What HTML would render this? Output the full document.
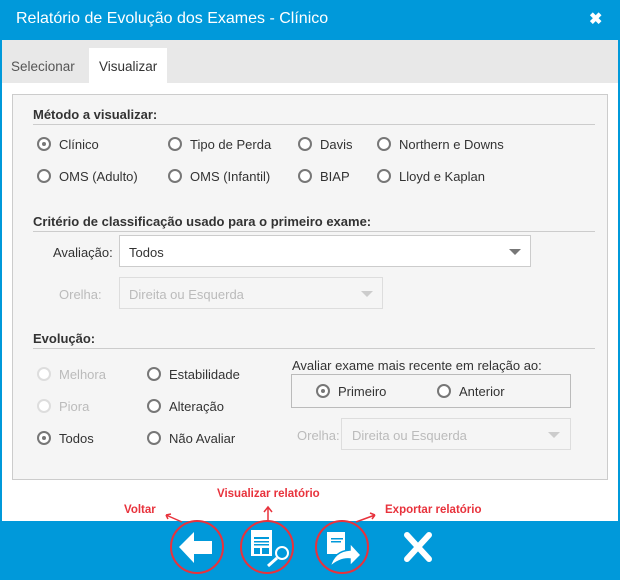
<!DOCTYPE html>
<html><head><meta charset="utf-8"><style>
*{margin:0;padding:0;box-sizing:border-box}
body{width:620px;height:580px;position:relative;background:#0099da;font-family:"Liberation Sans",sans-serif;overflow:hidden}
.a{position:absolute}
.win{left:2px;top:40px;width:616px;height:481px;background:#fff}
.tabs{left:2px;top:40px;width:616px;height:43px;background:#e8e8e8}
.panel{left:12px;top:94px;width:596px;height:386px;background:#f5f5f5;border:1px solid #ccc}
.h{font-size:13px;font-weight:bold;color:#333}
.line{height:1px;background:#ccc}
.t{font-size:13px;color:#333;white-space:nowrap}
.d{color:#bbb}
.r{position:absolute;width:14px;height:14px;border:2px solid #777;border-radius:50%;background:#fff}
.r.on::after{content:"";position:absolute;left:3px;top:3px;width:4px;height:4px;border-radius:50%;background:#777}
.r.dis{border-color:#ddd}
.sel{background:#fff;border:1px solid #ccc}
.sel.dis{background:#f5f5f5;border-color:#ddd}
.tri{position:absolute;width:0;height:0;border-left:6px solid transparent;border-right:6px solid transparent;border-top:6px solid #777}
.ann{font-size:11.5px;font-weight:bold;color:#e8323c;white-space:nowrap}
.c{position:absolute;width:54px;height:54px;border:2.5px solid #e8323c;border-radius:50%}
</style></head><body>
<div class="a t" style="left:16px;top:10px;font-size:16px;color:#fff">Relatório de Evolução dos Exames - Clínico</div>
<div class="a" style="left:589px;top:9px;color:#fff;font-size:16px;font-weight:bold">✖</div>
<div class="a win"></div>
<div class="a tabs"></div>
<div class="a" style="left:89px;top:48px;width:78px;height:35px;background:#fff"></div>
<div class="a t" style="left:11px;top:59px;font-size:13.5px;color:#555">Selecionar</div>
<div class="a t" style="left:99px;top:59px;font-size:13.5px;color:#333">Visualizar</div>
<div class="a panel"></div>

<div class="a h" style="left:33px;top:107px">Método a visualizar:</div>
<div class="a line" style="left:33px;top:124px;width:562px"></div>
<div class="r on" style="left:37px;top:137px"></div><div class="a t" style="left:59px;top:137px">Clínico</div>
<div class="r" style="left:168px;top:137px"></div><div class="a t" style="left:190px;top:137px">Tipo de Perda</div>
<div class="r" style="left:298px;top:137px"></div><div class="a t" style="left:320px;top:137px">Davis</div>
<div class="r" style="left:377px;top:137px"></div><div class="a t" style="left:399px;top:137px">Northern e Downs</div>
<div class="r" style="left:37px;top:169px"></div><div class="a t" style="left:59px;top:169px">OMS (Adulto)</div>
<div class="r" style="left:168px;top:169px"></div><div class="a t" style="left:190px;top:169px">OMS (Infantil)</div>
<div class="r" style="left:298px;top:169px"></div><div class="a t" style="left:320px;top:169px">BIAP</div>
<div class="r" style="left:377px;top:169px"></div><div class="a t" style="left:399px;top:169px">Lloyd e Kaplan</div>

<div class="a h" style="left:33px;top:214px">Critério de classificação usado para o primeiro exame:</div>
<div class="a line" style="left:33px;top:231px;width:562px"></div>
<div class="a t" style="left:53px;top:245px">Avaliação:</div>
<div class="a sel" style="left:119px;top:235px;width:412px;height:32px"></div>
<div class="a t" style="left:129px;top:245px">Todos</div>
<div class="tri" style="left:509px;top:249px"></div>
<div class="a t d" style="left:59px;top:287px">Orelha:</div>
<div class="a sel dis" style="left:119px;top:277px;width:264px;height:32px"></div>
<div class="a t d" style="left:129px;top:287px">Direita ou Esquerda</div>
<div class="tri" style="left:361px;top:291px;border-top-color:#ccc"></div>

<div class="a h" style="left:33px;top:331px">Evolução:</div>
<div class="a line" style="left:33px;top:348px;width:562px"></div>
<div class="r dis" style="left:37px;top:367px"></div><div class="a t d" style="left:59px;top:367px">Melhora</div>
<div class="r" style="left:147px;top:367px"></div><div class="a t" style="left:169px;top:367px">Estabilidade</div>
<div class="r dis" style="left:37px;top:399px"></div><div class="a t d" style="left:59px;top:399px">Piora</div>
<div class="r" style="left:147px;top:399px"></div><div class="a t" style="left:169px;top:399px">Alteração</div>
<div class="r on" style="left:37px;top:431px"></div><div class="a t" style="left:59px;top:431px">Todos</div>
<div class="r" style="left:147px;top:431px"></div><div class="a t" style="left:169px;top:431px">Não Avaliar</div>

<div class="a t" style="left:292px;top:358px">Avaliar exame mais recente em relação ao:</div>
<div class="a" style="left:291px;top:374px;width:280px;height:34px;border:1px solid #bbb"></div>
<div class="r on" style="left:316px;top:384px"></div><div class="a t" style="left:338px;top:384px">Primeiro</div>
<div class="r" style="left:437px;top:384px"></div><div class="a t" style="left:459px;top:384px">Anterior</div>
<div class="a t d" style="left:297px;top:428px">Orelha:</div>
<div class="a sel dis" style="left:341px;top:418px;width:230px;height:32px"></div>
<div class="a t d" style="left:352px;top:428px">Direita ou Esquerda</div>
<div class="tri" style="left:548px;top:432px;border-top-color:#ccc"></div>

<div class="a ann" style="left:124px;top:504px">Voltar</div>
<div class="a ann" style="left:217px;top:488px">Visualizar relatório</div>
<div class="a ann" style="left:385px;top:504px">Exportar relatório</div>
<svg class="a" style="left:0;top:0" width="620" height="580">
<g stroke="#e8323c" stroke-width="1.5" fill="none">
<path d="M182 522 L166 515 M166 515 l5 -1 M166 515 l2 4"/>
<path d="M268 521 L268 508 M264 512 L268 507 L272 512"/>
<path d="M356 522 L375 515 M375 515 l-5 -2 M375 515 l-3 4"/>
</g>
<path fill="#fff" d="M179 547 L194 532 L194 541 L212 541 L212 554 L194 554 L194 563 Z"/>
<rect x="251" y="530" width="21" height="26" fill="#fff"/>
<g fill="#0099da"><rect x="254" y="537" width="15" height="2"/><rect x="254" y="541" width="15" height="1.5"/><rect x="254" y="544" width="15" height="1.5"/><rect x="254" y="548" width="6" height="6"/><rect x="262" y="548" width="7" height="6"/></g>
<circle cx="282" cy="553" r="6" fill="#0099da" stroke="#fff" stroke-width="2"/>
<path d="M277 558 L268 566" stroke="#fff" stroke-width="3"/>
<rect x="327" y="532" width="18" height="22" fill="#fff"/>
<rect x="331" y="538" width="12" height="1.5" fill="#0099da"/><rect x="331" y="541" width="10" height="1.5" fill="#0099da"/>
<path fill="#fff" stroke="#0099da" stroke-width="1.5" d="M330 567 Q334 551 350 550 L350 543 L361 555 L350 566 L350 559 Q340 558 330 567 Z"/>
<path d="M407 535 L429 559 M429 535 L407 559" stroke="#fff" stroke-width="6" stroke-linecap="round"/>
</svg>
<div class="c" style="left:170px;top:520px"></div>
<div class="c" style="left:240px;top:520px"></div>
<div class="c" style="left:315px;top:520px"></div>
</body></html>
